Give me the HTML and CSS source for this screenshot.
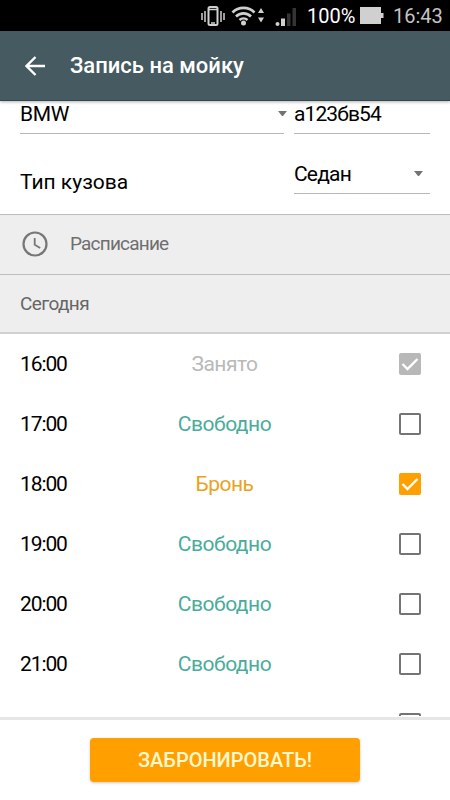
FILE: index.html
```html
<!DOCTYPE html>
<html lang="ru">
<head>
<meta charset="utf-8">
<title>Запись на мойку</title>
<link rel="stylesheet" href="styles.css">
</head>
<body>
<div class="screen">
  <div class="status">
    <svg class="status-icons" width="100" height="31" viewBox="0 0 100 31" fill="none" stroke="#d0d0d0">
      <rect x="8.5" y="7" width="9" height="18" rx="1.5" stroke-width="2"/>
      <path d="M8 9.5h10M11 23h4" stroke-width="1.5"/>
      <path d="M5 11v11M21 11v11M2 13v7M24 13v7" stroke-width="1.5"/>
      <path d="M32.5 12.5a15.500 15.500 0 0 1 22 0M36 16.500a10.500 10.500 0 0 1 15 0M39.500 20a6 6 0 0 1 8 0" stroke-width="2.600"/>
      <circle cx="43.500" cy="23" r="2.500" fill="#d0d0d0" stroke="none"/>
      <path d="M58 13l3-5 3 5zM58 17.500h6l-3 5z" fill="#d0d0d0" stroke="none"/>
      <circle cx="77.500" cy="24" r="2" fill="#d0d0d0" stroke="none"/>
      <path d="M81 18.500h4v7.500h-4z" fill="#d0d0d0" stroke="none"/>
      <path d="M87 13.500h3.500v12.500H87zM92.500 8H96v18h-3.500z" fill="#343434" stroke="none"/>
    </svg>
    <span class="percent">100%</span>
    <svg class="battery" width="24" height="31" viewBox="0 0 24 31"><path d="M0 7h21v6h2.500v5H21v6H0z" fill="#d0d0d0"/></svg>
    <span class="clock">16:43</span>
  </div>
  <header class="appbar">
    <svg class="back" width="20" height="20" viewBox="0 0 20 20" fill="none" stroke="#fff" stroke-width="2.400"><path d="M20 10H2M10.500 1L1.500 10l9 9"/></svg>
    <h1 class="title">Запись на мойку</h1>
  </header>
  <main class="content">
    <div class="form-row brand-row">
      <div class="field brand"><span>BMW</span><i class="caret"></i></div>
      <div class="field plate"><span>а123бв54</span></div>
    </div>
    <div class="form-row body-row">
      <span class="label">Тип кузова</span>
      <div class="field body-type"><span>Седан</span><i class="caret"></i></div>
    </div>
    <div class="section">
      <svg width="30" height="30" viewBox="0 0 30 30" fill="none" stroke="#777"><circle cx="15" cy="15" r="11.500" stroke-width="2.200"/><path d="M14.700 9v6.700l5.500 3.300" stroke-width="1.800"/></svg>
      <span>Расписание</span>
    </div>
    <div class="day"><span>Сегодня</span></div>
    <div class="slot"><span class="time">16:00</span><span class="state busy">Занято</span><span class="box filled grey"><svg viewBox="0 0 22 22"><path d="M3.500 11l5 5L18.500 6"/></svg></span></div>
    <div class="slot"><span class="time">17:00</span><span class="state free">Свободно</span><span class="box"></span></div>
    <div class="slot"><span class="time">18:00</span><span class="state mine">Бронь</span><span class="box filled orange"><svg viewBox="0 0 22 22"><path d="M3.500 11l5 5L18.500 6"/></svg></span></div>
    <div class="slot"><span class="time">19:00</span><span class="state free">Свободно</span><span class="box"></span></div>
    <div class="slot"><span class="time">20:00</span><span class="state free">Свободно</span><span class="box"></span></div>
    <div class="slot"><span class="time">21:00</span><span class="state free">Свободно</span><span class="box"></span></div>
    <div class="slot"><span class="time"></span><span class="state"></span><span class="box"></span></div>
  </main>
  <footer class="footer"><button class="book">ЗАБРОНИРОВАТЬ!</button></footer>
</div>
</body>
</html>
```
FILE: styles.css
```css
* { box-sizing: border-box; }
body { margin: 0; font-family: Roboto, "Liberation Sans", sans-serif; color: #000; }
.screen { width: 450px; height: 800px; display: flex; flex-direction: column; overflow: hidden; background: #fff; }
.status { flex: none; height: 31px; background: #000; display: flex; align-items: center; padding-left: 200px; font-size: 20px; line-height: 31px; white-space: nowrap; }
.status-icons { flex: none; }
.percent { width: 53px; margin-left: 7px; color: #fff; padding-top: 1px; }
.battery { flex: none; }
.clock { margin-left: 9px; color: #c4c4c4; padding-top: 1px; }
.appbar { flex: none; height: 70px; background: #455a61; border-bottom: 1px solid #34474f; box-shadow: 0 1px 3px rgba(0, 0, 0, .3); display: flex; align-items: center; padding-left: 25px; position: relative; }
.title { margin: 0 0 0 25px; font-size: 22px; font-weight: 500; line-height: 30px; color: #fff; letter-spacing: 0; white-space: nowrap; }
.content { flex: none; height: 615px; overflow: hidden; }
.form-row { display: flex; padding: 0 20px; }
.brand-row { height: 33px; gap: 10px; }
.body-row { height: 80px; justify-content: space-between; }
.field { display: flex; align-items: center; justify-content: space-between; border-bottom: 1px solid #b8b8b8; font-size: 21px; line-height: 24px; padding-bottom: 7px; white-space: nowrap; }
.brand { width: 264px; letter-spacing: -.3px; }
.plate { width: 136px; letter-spacing: -.9px; }
.body-type { width: 136px; height: 60px; padding: 20px 6px 0 0; letter-spacing: -.8px; }
.caret { width: 9px; height: 5px; margin-right: -3px; border: solid transparent; border-width: 5px 4.5px 0; border-top-color: #737373; }
.body-type .caret { margin-right: 1px; }
.label { font-size: 21px; line-height: 24px; padding-top: 36px; letter-spacing: 0; }
.section { height: 61px; background: #eee; border-top: 1px solid #bdbdbd; border-bottom: 1px solid #bdbdbd; display: flex; align-items: center; padding: 0 0 2px 20px; gap: 20px; font-size: 19px; color: #6e6e6e; letter-spacing: -.8px; }
.day { height: 59px; background: #eee; border-bottom: 2px solid #d0d0d0; display: flex; align-items: center; padding-left: 20px; font-size: 19px; color: #666; letter-spacing: -.6px; }
.slot { height: 60px; display: grid; grid-template-columns: 108px 193px 1fr; align-items: center; padding: 0 29px 0 20px; font-size: 21px; line-height: 24px; }
.time { letter-spacing: -1.1px; }
.state { text-align: center; letter-spacing: -.5px; }
.busy { color: #b9b9b9; }
.free { color: #4aac9a; }
.mine { color: #eba21c; }
.box { justify-self: end; width: 22px; height: 22px; border: 2px solid #747474; border-radius: 2px; }
.filled { border: 0; }
.filled svg { display: block; fill: none; stroke: #fff; stroke-width: 2.400; }
.grey { background: #b8b8b8; }
.orange { background: #ff9f00; }
.footer { flex: 1; margin-top: 1px; border-top: 3px solid #e6e6e6; display: flex; justify-content: center; align-items: flex-start; padding-top: 18px; }
.book { width: 270px; height: 44px; padding: 0 0 1px; border: 0; border-radius: 4px; background: #ffa000; color: #fff8d0; font: 500 20px Roboto, "Liberation Sans", sans-serif; box-shadow: 0 1px 3px rgba(0, 0, 0, .22); }
```
